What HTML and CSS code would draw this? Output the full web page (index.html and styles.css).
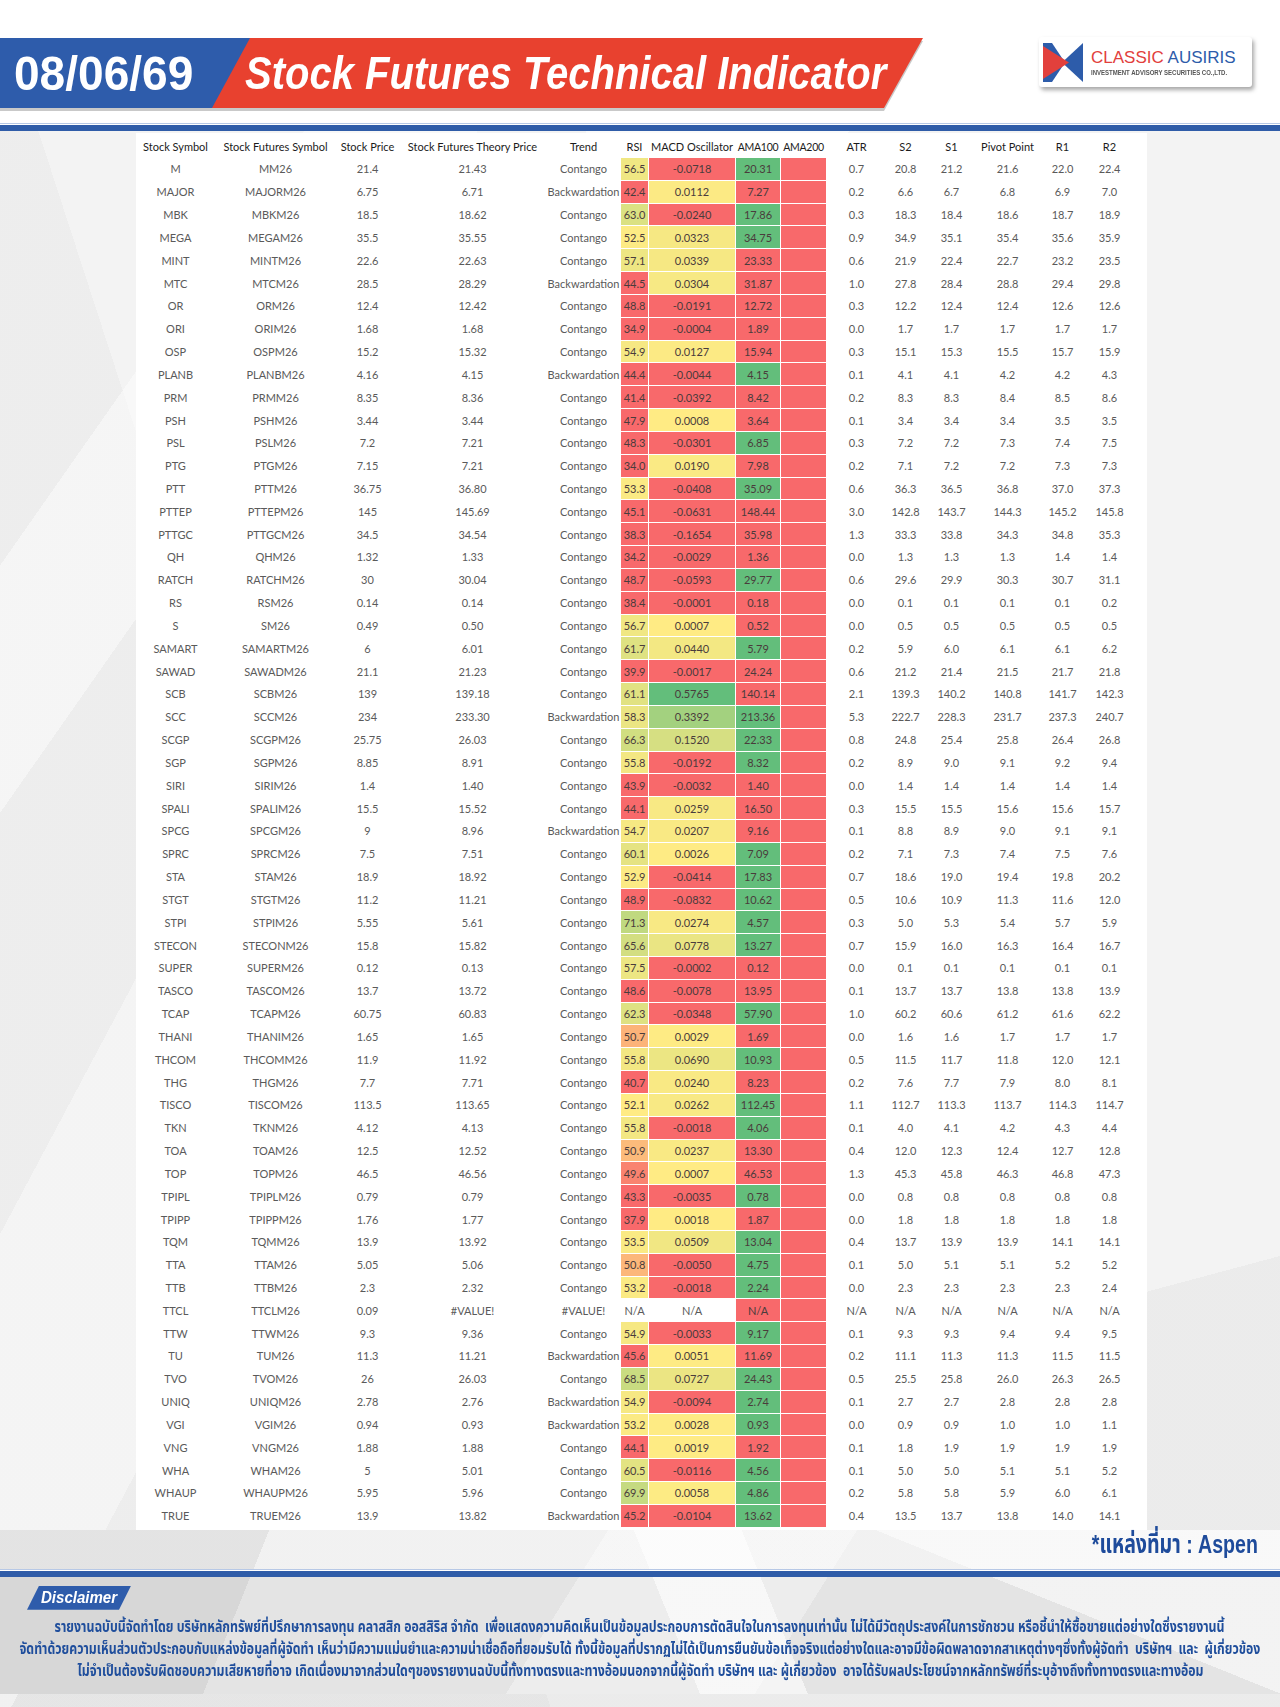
FILE: index.html
```html
<!DOCTYPE html>
<html lang="en">
<head>
<meta charset="utf-8">
<title>Stock Futures Technical Indicator</title>
<link rel="stylesheet" href="styles.css">
</head>
<body>
<div class="page">
  <header class="top">
    <div class="banner-wrap">
      <div class="banner">
        <div class="date"><span>08/06/69</span></div>
        <div class="title"><span>Stock Futures Technical Indicator</span></div>
      </div>
    </div>
    <div class="logo">
      <svg viewBox="0 0 40 39" aria-hidden="true">
        <polygon points="40,0 40,39 19,19.5" fill="#2d5caa"/>
        <polygon points="0,0 9,0 22,19.5 9,39 0,39" fill="#2d5caa"/>
        <polygon points="0,3 26,19.5 0,36" fill="#e2403c"/>
      </svg>
      <div class="logo-text">
        <div class="name"><span class="red">CLASSIC</span> <span class="blue">AUSIRIS</span></div>
        <div class="sub">INVESTMENT ADVISORY SECURITIES CO.,LTD.</div>
      </div>
    </div>
  </header>
  <div class="rule"></div>

  <main class="panel">
    <table class="grid">
      <colgroup>
        <col class="w-sym"><col class="w-fut"><col class="w-price"><col class="w-theory"><col class="w-trend">
        <col class="w-rsi"><col class="w-macd"><col class="w-ama1"><col class="w-ama2"><col class="w-atr">
        <col class="w-s2"><col class="w-s1"><col class="w-pp"><col class="w-r1"><col class="w-r2">
      </colgroup>
      <thead>
        <tr>
          <th>Stock Symbol</th><th>Stock Futures Symbol</th><th>Stock Price</th><th>Stock Futures Theory Price</th>
          <th>Trend</th><th>RSI</th><th>MACD Oscillator</th><th class="tight">AMA100</th><th class="tight">AMA200</th><th>ATR</th>
          <th>S2</th><th>S1</th><th>Pivot Point</th><th>R1</th><th>R2</th>
        </tr>
      </thead>
      <tbody id="rows"></tbody>
    </table>
  </main>

  <section class="bottom">
    <div class="source" lang="th"><span class="fit-right" data-fit="166">*แหล่งที่มา : Aspen</span></div>
    <div class="rule"></div>
    <div class="disc">
      <div class="badge"><span>Disclaimer</span></div>
      <div class="lines" lang="th">
        <p><span data-fit="1170">รายงานฉบับนี้จัดทำโดย บริษัทหลักทรัพย์ที่ปรึกษาการลงทุน คลาสสิก ออสสิริส จำกัด  เพื่อแสดงความคิดเห็นเป็นข้อมูลประกอบการตัดสินใจในการลงทุนเท่านั้น ไม่ได้มีวัตถุประสงค์ในการชักชวน หรือชี้นำให้ซื้อขายแต่อย่างใดซึ่งรายงานนี้</span></p>
        <p><span data-fit="1241">จัดทำด้วยความเห็นส่วนตัวประกอบกับแหล่งข้อมูลที่ผู้จัดทำ เห็นว่ามีความแม่นยำและความน่าเชื่อถือที่ยอมรับได้ ทั้งนี้ข้อมูลที่ปรากฏไม่ได้เป็นการยืนยันข้อเท็จจริงแต่อย่างใดและอาจมีข้อผิดพลาดจากสาเหตุต่างๆซึ่งทั้งผู้จัดทำ  บริษัทฯ  และ  ผู้เกี่ยวข้อง</span></p>
        <p><span data-fit="1126">ไม่จำเป็นต้องรับผิดชอบความเสียหายที่อาจ เกิดเนื่องมาจากส่วนใดๆของรายงานฉบับนี้ทั้งทางตรงและทางอ้อมนอกจากนี้ผู้จัดทำ บริษัทฯ และ ผู้เกี่ยวข้อง  อาจได้รับผลประโยชน์จากหลักทรัพย์ที่ระบุอ้างถึงทั้งทางตรงและทางอ้อม</span></p>
      </div>
    </div>
  </section>
</div>
<script src="script.js"></script>
</body>
</html>
```

FILE: styles.css
```css
* { box-sizing: border-box; }
html, body { margin: 0; padding: 0; }
body {
  width: 1280px;
  font-family: Lato, "Noto Sans", "Liberation Sans", sans-serif;
  background: #ffffff;
}
.page {
  width: 1280px;
  height: 1707px;
  overflow: hidden;
  background-color: #f3f3f3;
  background-image:
    linear-gradient(180deg, #ffffff 0 131px, transparent 131px),
    linear-gradient(125deg, transparent 0 16%, rgba(255,255,255,0.45) 16% 23%, transparent 23%),
    linear-gradient(72deg, rgba(0,0,0,0.025) 0 30%, transparent 30%),
    linear-gradient(-62deg, transparent 0 58%, rgba(255,255,255,0.6) 58% 70%, transparent 70%),
    linear-gradient(165deg, transparent 0 78%, rgba(0,0,0,0.03) 78%);
}

/* ---------- header ---------- */
.top {
  height: 123px;
  display: flex;
  align-items: flex-start;
  padding-top: 37px;
  background: #ffffff;
}
.banner-wrap {
  margin-top: 1px;
  filter: drop-shadow(0 3px 0 #c9c9c9);
}
.banner {
  width: 923px;
  height: 70px;
  display: flex;
  align-items: center;
  background: #e8412f;
  clip-path: polygon(0 0, 100% 0, 884px 100%, 0 100%);
}
.date {
  flex: none;
  width: 250px;
  height: 100%;
  display: flex;
  align-items: center;
  padding-left: 14px;
  background: #2e5cab;
  clip-path: polygon(0 0, 100% 0, 212px 100%, 0 100%);
  color: #ffffff;
  font: 700 49px/1 "Liberation Sans", Arial, sans-serif;
}
.date span {
  display: inline-block;
  transform: scaleX(0.94);
  transform-origin: left center;
}
.title {
  flex: none;
  margin-left: -5px;
  color: #ffffff;
  font: italic 700 46px/1 "Liberation Sans", Arial, sans-serif;
  white-space: nowrap;
}
.title span {
  display: inline-block;
  transform: scaleX(0.87);
  transform-origin: left center;
}

.logo {
  margin-left: auto;
  margin-right: 28px;
  width: 213px;
  height: 50px;
  background: #ffffff;
  border-radius: 3px;
  box-shadow: 2px 3px 4px rgba(0,0,0,0.35);
  display: flex;
  align-items: center;
  gap: 8px;
  padding-left: 4px;
}
.logo svg { flex: none; width: 40px; height: 39px; }
.logo-text { line-height: 1; }
.logo-text .name {
  font: 400 17px/1 "Liberation Sans", Arial, sans-serif;
  white-space: nowrap;
}
.red { color: #e2403c; }
.blue { color: #2d5caa; }
.logo-text .sub {
  margin-top: 3px;
  font: 700 7px/1 "Liberation Sans", Arial, sans-serif;
  color: #555555;
  white-space: nowrap;
  transform: scaleX(0.86);
  transform-origin: left center;
}

.rule {
  height: 8px;
  background: linear-gradient(180deg, #b7c8e6 0 1px, #ffffff 1px 2px, #2f5ca8 2px);
}

/* ---------- table ---------- */
.panel {
  margin: 2px 0 0 136px;
  width: 1011px;
  background: #ffffff;
  padding: 2px 17px 2px 0;
}
.grid {
  border-collapse: collapse;
  table-layout: fixed;
  width: 994px;
  font-size: 11px;
  color: #5a5a5a;
}
.w-sym { width: 78px; }
.w-fut { width: 122px; }
.w-price { width: 62px; }
.w-theory { width: 148px; }
.w-trend { width: 74px; }
.w-rsi { width: 28px; }
.w-macd { width: 87px; }
.w-ama1 { width: 45px; }
.w-ama2 { width: 46px; }
.w-atr { width: 60px; }
.w-s2 { width: 38px; }
.w-s1 { width: 54px; }
.w-pp { width: 58px; }
.w-r1 { width: 52px; }
.w-r2 { width: 42px; }
.grid th {
  height: 22px;
  padding: 0;
  font-weight: 400;
  color: #1b1b1b;
  text-align: center;
  white-space: nowrap;
  border: 1px solid #ffffff;
}
.grid th.tight {
  font-size: 10.5px;
  letter-spacing: -0.3px;
}
.grid td {
  height: 22.83px;
  padding: 0;
  text-align: center;
  white-space: nowrap;
  border: 1px solid #ffffff;
  line-height: 1;
}
.grid td.col { color: #4a3c3c; }
.grid td.red-cell { background: #f8696b; }
.grid td.green-cell { background: #63be7b; }

/* ---------- bottom ---------- */
.bottom {
  height: 164px;
  background-color: #e4e4e4;
  background-image:
    linear-gradient(112deg, rgba(0,0,0,0.06) 0 20%, transparent 20%),
    linear-gradient(68deg, transparent 0 52%, rgba(255,255,255,0.6) 52% 60%, transparent 60%),
    linear-gradient(-58deg, transparent 0 38%, rgba(255,255,255,0.35) 38% 56%, transparent 56%),
    linear-gradient(22deg, transparent 0 76%, rgba(255,255,255,0.55) 76%),
    linear-gradient(180deg, rgba(255,255,255,0.5) 0 39px, transparent 39px);
}
.source {
  height: 39px;
  text-align: right;
  padding-right: 22px;
  font: 700 26px/28px "Liberation Sans", "Noto Sans Thai", "Noto Sans", sans-serif;
  color: #1e4b9b;
}
.fit-right {
  display: inline-block;
  white-space: nowrap;
  transform-origin: right center;
}
.disc { padding-top: 9px; }
.badge {
  margin-left: 27px;
  width: 104px;
  height: 24px;
  background: #2e5cab;
  clip-path: polygon(12px 0, 100% 0, 92px 100%, 0 100%);
  padding-left: 14px;
  color: #ffffff;
  font: italic 700 16px/24px "Liberation Sans", Arial, sans-serif;
}
.badge span {
  display: inline-block;
  transform: scaleX(0.94);
  transform-origin: left center;
}
.lines { margin-top: 7px; }
.lines p {
  margin: 0;
  display: flex;
  justify-content: center;
  white-space: pre;
  font: 700 15px/22px "Noto Sans Thai", "Noto Sans", "Liberation Sans", sans-serif;
  color: #1f4e9c;
}
.lines p span {
  display: inline-block;
  flex: none;
  transform-origin: center center;
}
```

FILE: script.js
```javascript
const DATA = `M|21.4|21.43|C|56.5|-0.0718|20.31|0.7|20.8|21.2|21.6|22.0|22.4
MAJOR|6.75|6.71|B|42.4|0.0112|7.27|0.2|6.6|6.7|6.8|6.9|7.0
MBK|18.5|18.62|C|63.0|-0.0240|17.86|0.3|18.3|18.4|18.6|18.7|18.9
MEGA|35.5|35.55|C|52.5|0.0323|34.75|0.9|34.9|35.1|35.4|35.6|35.9
MINT|22.6|22.63|C|57.1|0.0339|23.33|0.6|21.9|22.4|22.7|23.2|23.5
MTC|28.5|28.29|B|44.5|0.0304|31.87|1.0|27.8|28.4|28.8|29.4|29.8
OR|12.4|12.42|C|48.8|-0.0191|12.72|0.3|12.2|12.4|12.4|12.6|12.6
ORI|1.68|1.68|C|34.9|-0.0004|1.89|0.0|1.7|1.7|1.7|1.7|1.7
OSP|15.2|15.32|C|54.9|0.0127|15.94|0.3|15.1|15.3|15.5|15.7|15.9
PLANB|4.16|4.15|B|44.4|-0.0044|4.15|0.1|4.1|4.1|4.2|4.2|4.3
PRM|8.35|8.36|C|41.4|-0.0392|8.42|0.2|8.3|8.3|8.4|8.5|8.6
PSH|3.44|3.44|C|47.9|0.0008|3.64|0.1|3.4|3.4|3.4|3.5|3.5
PSL|7.2|7.21|C|48.3|-0.0301|6.85|0.3|7.2|7.2|7.3|7.4|7.5
PTG|7.15|7.21|C|34.0|0.0190|7.98|0.2|7.1|7.2|7.2|7.3|7.3
PTT|36.75|36.80|C|53.3|-0.0408|35.09|0.6|36.3|36.5|36.8|37.0|37.3
PTTEP|145|145.69|C|45.1|-0.0631|148.44|3.0|142.8|143.7|144.3|145.2|145.8
PTTGC|34.5|34.54|C|38.3|-0.1654|35.98|1.3|33.3|33.8|34.3|34.8|35.3
QH|1.32|1.33|C|34.2|-0.0029|1.36|0.0|1.3|1.3|1.3|1.4|1.4
RATCH|30|30.04|C|48.7|-0.0593|29.77|0.6|29.6|29.9|30.3|30.7|31.1
RS|0.14|0.14|C|38.4|-0.0001|0.18|0.0|0.1|0.1|0.1|0.1|0.2
S|0.49|0.50|C|56.7|0.0007|0.52|0.0|0.5|0.5|0.5|0.5|0.5
SAMART|6|6.01|C|61.7|0.0440|5.79|0.2|5.9|6.0|6.1|6.1|6.2
SAWAD|21.1|21.23|C|39.9|-0.0017|24.24|0.6|21.2|21.4|21.5|21.7|21.8
SCB|139|139.18|C|61.1|0.5765|140.14|2.1|139.3|140.2|140.8|141.7|142.3
SCC|234|233.30|B|58.3|0.3392|213.36|5.3|222.7|228.3|231.7|237.3|240.7
SCGP|25.75|26.03|C|66.3|0.1520|22.33|0.8|24.8|25.4|25.8|26.4|26.8
SGP|8.85|8.91|C|55.8|-0.0192|8.32|0.2|8.9|9.0|9.1|9.2|9.4
SIRI|1.4|1.40|C|43.9|-0.0032|1.40|0.0|1.4|1.4|1.4|1.4|1.4
SPALI|15.5|15.52|C|44.1|0.0259|16.50|0.3|15.5|15.5|15.6|15.6|15.7
SPCG|9|8.96|B|54.7|0.0207|9.16|0.1|8.8|8.9|9.0|9.1|9.1
SPRC|7.5|7.51|C|60.1|0.0026|7.09|0.2|7.1|7.3|7.4|7.5|7.6
STA|18.9|18.92|C|52.9|-0.0414|17.83|0.7|18.6|19.0|19.4|19.8|20.2
STGT|11.2|11.21|C|48.9|-0.0832|10.62|0.5|10.6|10.9|11.3|11.6|12.0
STPI|5.55|5.61|C|71.3|0.0274|4.57|0.3|5.0|5.3|5.4|5.7|5.9
STECON|15.8|15.82|C|65.6|0.0778|13.27|0.7|15.9|16.0|16.3|16.4|16.7
SUPER|0.12|0.13|C|57.5|-0.0002|0.12|0.0|0.1|0.1|0.1|0.1|0.1
TASCO|13.7|13.72|C|48.6|-0.0078|13.95|0.1|13.7|13.7|13.8|13.8|13.9
TCAP|60.75|60.83|C|62.3|-0.0348|57.90|1.0|60.2|60.6|61.2|61.6|62.2
THANI|1.65|1.65|C|50.7|0.0029|1.69|0.0|1.6|1.6|1.7|1.7|1.7
THCOM|11.9|11.92|C|55.8|0.0690|10.93|0.5|11.5|11.7|11.8|12.0|12.1
THG|7.7|7.71|C|40.7|0.0240|8.23|0.2|7.6|7.7|7.9|8.0|8.1
TISCO|113.5|113.65|C|52.1|0.0262|112.45|1.1|112.7|113.3|113.7|114.3|114.7
TKN|4.12|4.13|C|55.8|-0.0018|4.06|0.1|4.0|4.1|4.2|4.3|4.4
TOA|12.5|12.52|C|50.9|0.0237|13.30|0.4|12.0|12.3|12.4|12.7|12.8
TOP|46.5|46.56|C|49.6|0.0007|46.53|1.3|45.3|45.8|46.3|46.8|47.3
TPIPL|0.79|0.79|C|43.3|-0.0035|0.78|0.0|0.8|0.8|0.8|0.8|0.8
TPIPP|1.76|1.77|C|37.9|0.0018|1.87|0.0|1.8|1.8|1.8|1.8|1.8
TQM|13.9|13.92|C|53.5|0.0509|13.04|0.4|13.7|13.9|13.9|14.1|14.1
TTA|5.05|5.06|C|50.8|-0.0050|4.75|0.1|5.0|5.1|5.1|5.2|5.2
TTB|2.3|2.32|C|53.2|-0.0018|2.24|0.0|2.3|2.3|2.3|2.3|2.4
TTCL|0.09|#VALUE!|#VALUE!|N/A|N/A|N/A|N/A|N/A|N/A|N/A|N/A|N/A
TTW|9.3|9.36|C|54.9|-0.0033|9.17|0.1|9.3|9.3|9.4|9.4|9.5
TU|11.3|11.21|B|45.6|0.0051|11.69|0.2|11.1|11.3|11.3|11.5|11.5
TVO|26|26.03|C|68.5|0.0727|24.43|0.5|25.5|25.8|26.0|26.3|26.5
UNIQ|2.78|2.76|B|54.9|-0.0094|2.74|0.1|2.7|2.7|2.8|2.8|2.8
VGI|0.94|0.93|B|53.2|0.0028|0.93|0.0|0.9|0.9|1.0|1.0|1.1
VNG|1.88|1.88|C|44.1|0.0019|1.92|0.1|1.8|1.9|1.9|1.9|1.9
WHA|5|5.01|C|60.5|-0.0116|4.56|0.1|5.0|5.0|5.1|5.1|5.2
WHAUP|5.95|5.96|C|69.9|0.0058|4.86|0.2|5.8|5.8|5.9|6.0|6.1
TRUE|13.9|13.82|B|45.2|-0.0104|13.62|0.4|13.5|13.7|13.8|14.0|14.1`;

const RED = [248, 105, 107];
const YEL = [255, 235, 132];
const GRN = [99, 190, 123];

function mix(a, b, t) {
  t = Math.max(0, Math.min(1, t));
  return 'rgb(' + a.map((v, i) => Math.round(v + (b[i] - v) * t)).join(',') + ')';
}
function rsiColor(v) {
  if (v <= 49) return mix(RED, RED, 0);
  if (v < 52) return mix(RED, YEL, (v - 49) / 3);
  return mix(YEL, GRN, (v - 52) / 48);
}
function macdColor(v) {
  if (v < 0) return mix(RED, RED, 0);
  return mix(YEL, GRN, v / 0.5765);
}

const tbody = document.getElementById('rows');
DATA.trim().split('\n').forEach(line => {
  const f = line.split('|');
  const [sym, price, theory, trend, rsi, macd, ama, atr, s2, s1, pp, r1, r2] = f;
  const tr = document.createElement('tr');
  const add = (text, cls, bg) => {
    const td = document.createElement('td');
    td.textContent = text;
    if (cls) td.className = cls;
    if (bg) td.style.background = bg;
    tr.appendChild(td);
    return td;
  };
  add(sym);
  add(sym + 'M26');
  add(price);
  add(theory);
  add(trend === 'C' ? 'Contango' : trend === 'B' ? 'Backwardation' : trend);
  if (rsi === 'N/A') add('N/A'); else add(rsi, 'col', rsiColor(parseFloat(rsi)));
  if (macd === 'N/A') add('N/A'); else add(macd, 'col', macdColor(parseFloat(macd)));
  if (ama === 'N/A') add('N/A', 'col red-cell');
  else add(ama, 'col ' + (parseFloat(price) > parseFloat(ama) ? 'green-cell' : 'red-cell'));
  add('', 'red-cell');
  add(atr); add(s2); add(s1); add(pp); add(r1); add(r2);
  tbody.appendChild(tr);
});

/* squeeze condensed text runs to the measured widths of the reference */
document.querySelectorAll('[data-fit]').forEach(el => {
  const target = parseFloat(el.dataset.fit);
  const w = el.getBoundingClientRect().width;
  if (w > 0) el.style.transform = 'scaleX(' + (target / w).toFixed(4) + ')';
});
```
